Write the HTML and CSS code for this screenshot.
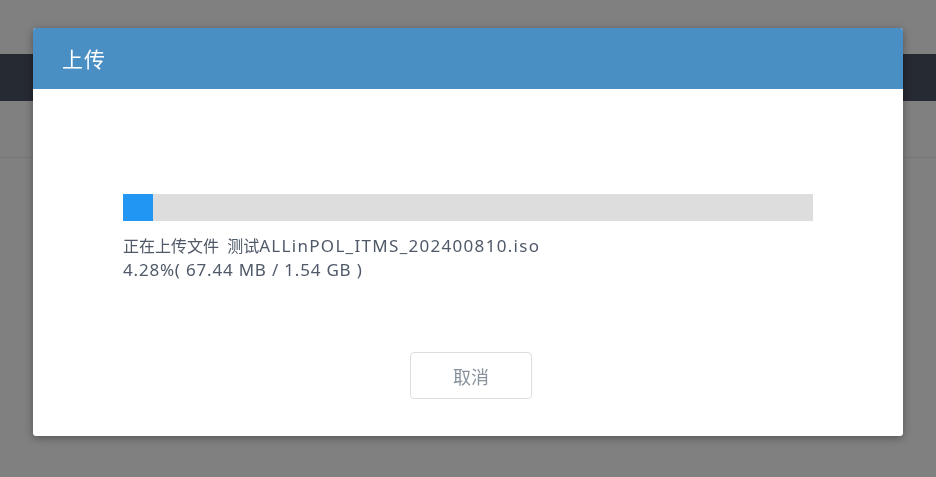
FILE: index.html
```html
<!DOCTYPE html>
<html lang="zh-CN">
<head>
<meta charset="utf-8">
<title>上传</title>
<link rel="stylesheet" href="styles.css">
</head>
<body>
<div class="page">
  <div class="topbar"></div>
  <div class="subbar"></div>
</div>
<div class="overlay">
  <div class="modal">
    <div class="modal-header">上传</div>
    <div class="modal-body">
      <div class="progress">
        <div class="progress-fill" style="width: 4.28%"></div>
      </div>
      <div class="status">
        <div class="file-line">正在上传文件 测试<span class="latin file-name">ALLinPOL_ITMS_202400810.iso</span></div>
        <div class="latin">4.28%( 67.44 MB / 1.54 GB )</div>
      </div>
    </div>
    <div class="modal-footer">
      <button class="btn-cancel" type="button">取消</button>
    </div>
  </div>
</div>
</body>
</html>
```
FILE: styles.css
```css
html, body {
  margin: 0;
  padding: 0;
  width: 936px;
  height: 477px;
  overflow: hidden;
  background: #808080;
  font-family: "Noto Sans", "Noto Sans CJK SC", sans-serif;
}
.page {
  display: flex;
  flex-direction: column;
  padding-top: 54px;
}
.topbar {
  height: 47px;
  background: #262a33;
}
.subbar {
  height: 56px;
  border-bottom: 1px solid #777777;
}
.overlay {
  position: fixed;
  inset: 0;
  display: flex;
  align-items: flex-start;
  justify-content: flex-start;
  padding: 28px 0 0 33px;
}
.modal {
  width: 870px;
  height: 408px;
  background: #ffffff;
  border-radius: 3px;
  box-shadow: 0 2px 8px rgba(0, 0, 0, 0.35);
  display: flex;
  flex-direction: column;
  overflow: hidden;
}
.modal-header {
  height: 61px;
  background: #4a8fc4;
  color: #ffffff;
  font-family: "Noto Sans CJK SC", sans-serif;
  font-size: 21px;
  line-height: 61px;
  padding-left: 29px;
  letter-spacing: 1px;
}
.modal-body {
  padding: 105px 90px 0 90px;
  flex: 1;
}
.progress {
  height: 27px;
  background: #dddddd;
}
.progress-fill {
  height: 100%;
  background: #2196f3;
}
.status {
  margin-top: 13px;
  font-size: 16px;
  line-height: 24px;
  color: #4f5968;
}
.file-line {
  word-spacing: 4px;
}
.latin {
  font-size: 17px;
  letter-spacing: 0.8px;
}
.file-name {
  letter-spacing: 1.3px;
}
.modal-footer {
  display: flex;
  justify-content: center;
  padding: 0 0 37px 6px;
}
.btn-cancel {
  width: 122px;
  height: 47px;
  background: #ffffff;
  border: 1px solid #dcdfe2;
  border-radius: 4px;
  color: #8a939d;
  font-family: "Noto Sans CJK SC", sans-serif;
  font-size: 18px;
  padding: 0;
}
```
